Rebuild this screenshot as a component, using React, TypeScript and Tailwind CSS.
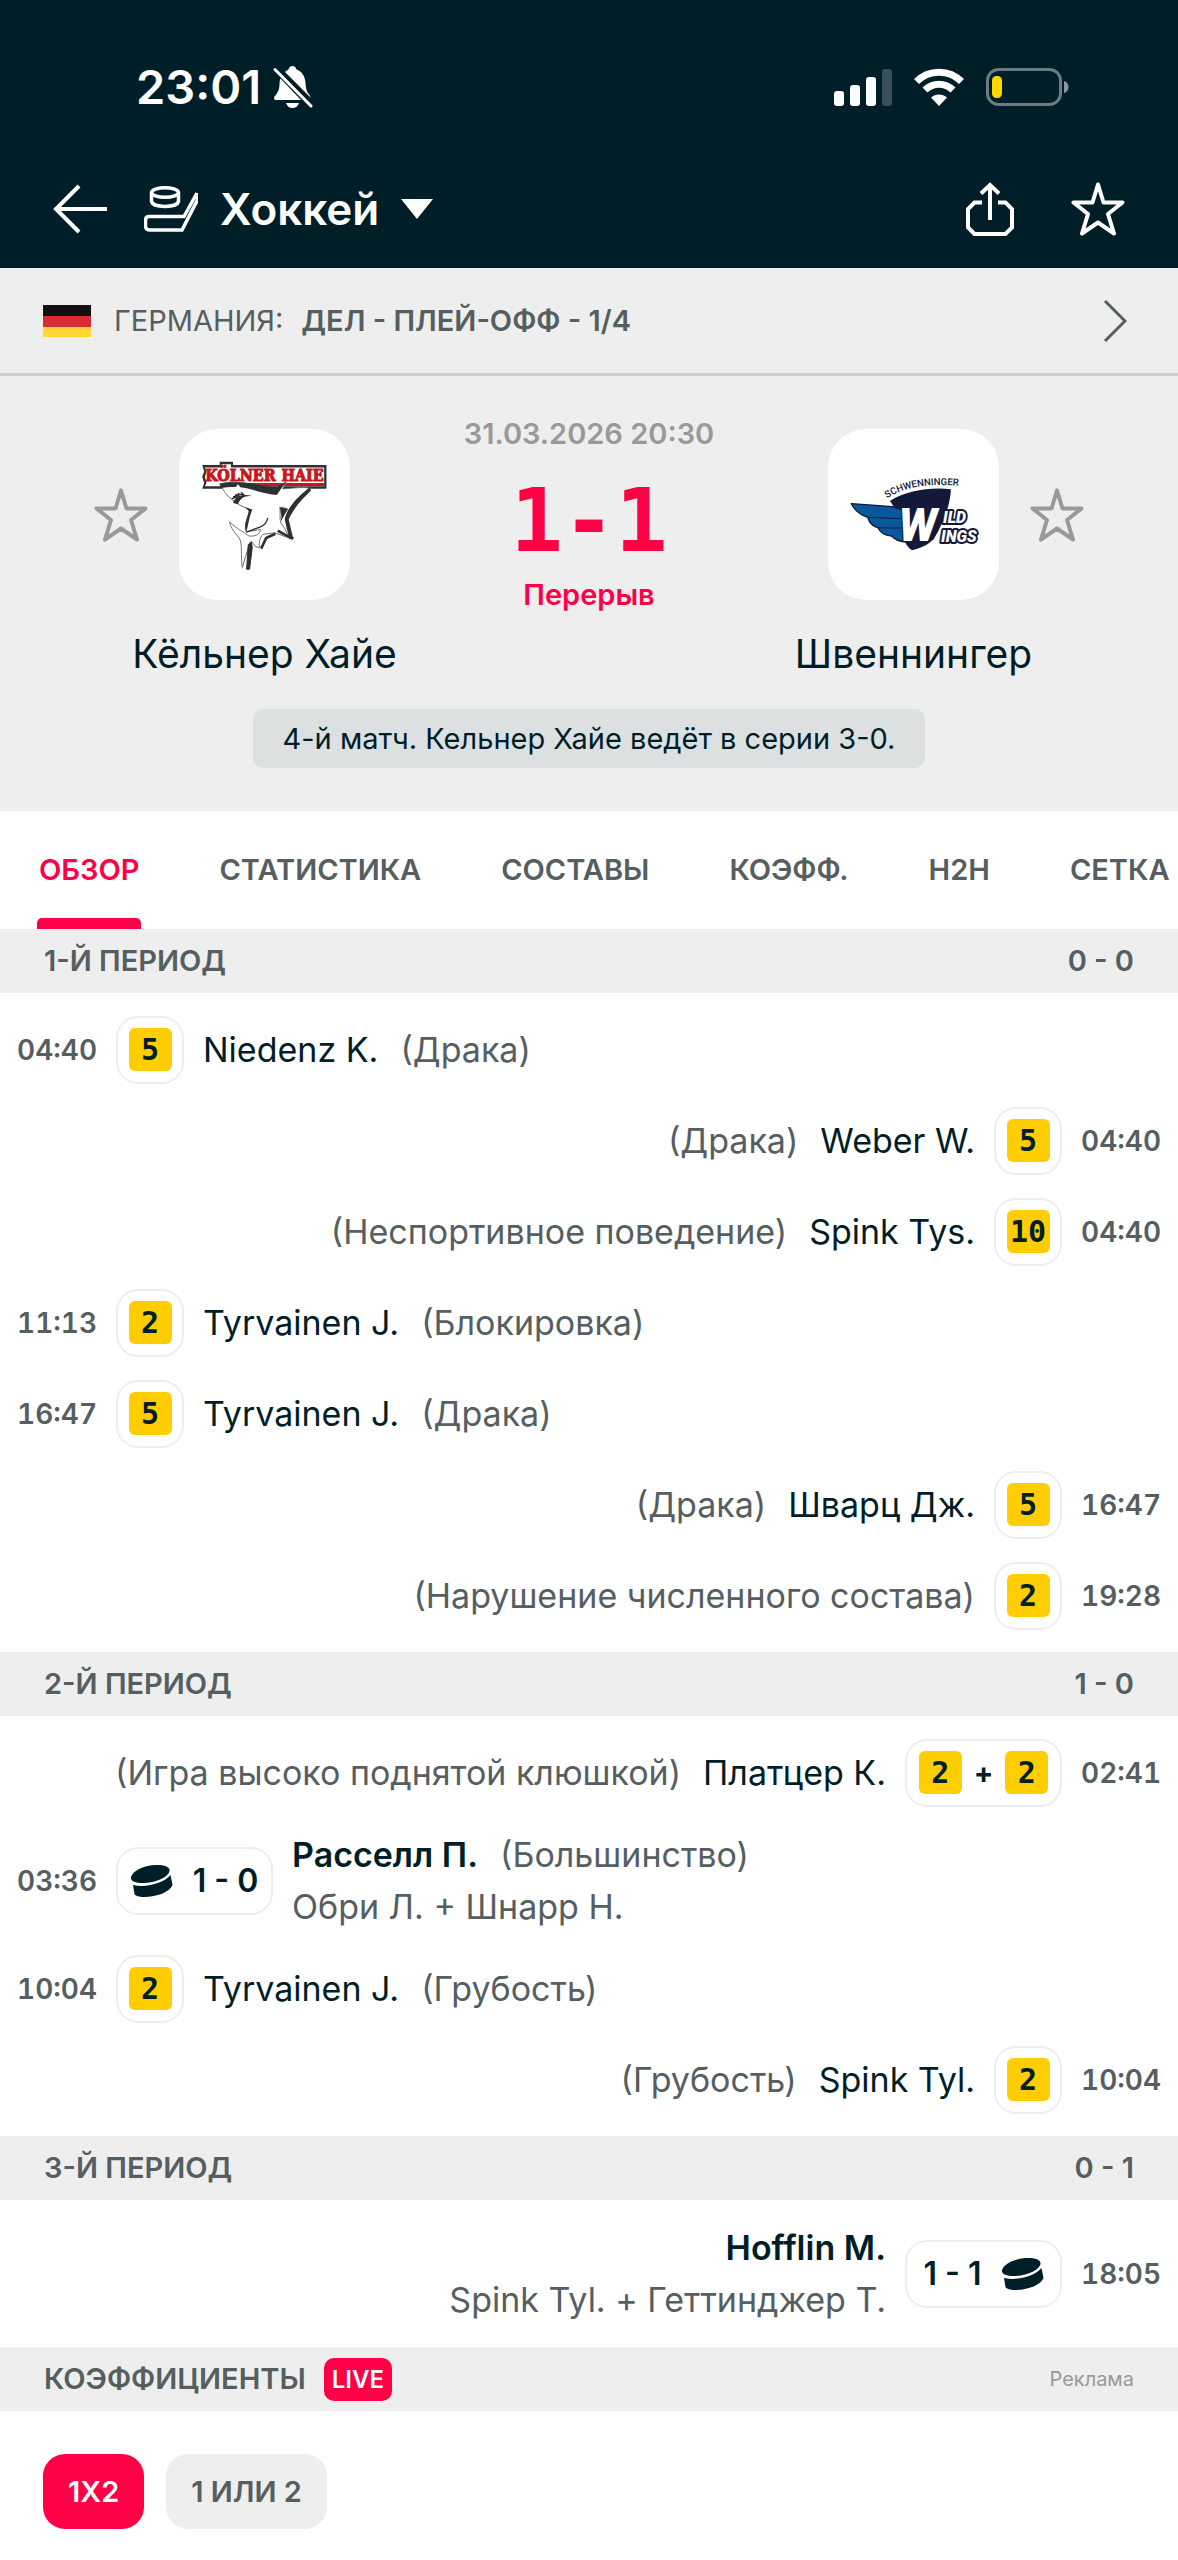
import { useState } from 'react';
import type { ReactNode } from 'react';
import clsx from 'clsx';

interface MatchEvent {
  time:     string;
  side:     'home' | 'away';
  penalty?: string[];
  score?:   string;
  player?:  string;
  reason?:  string;
  assists?: string;
}

interface Period {
  title:  string;
  score:  string;
  events: MatchEvent[];
}

const PERIODS: Period[] = [
  {
    title: '1-Й ПЕРИОД',
    score: '0 - 0',
    events: [
      { time: '04:40', side: 'home', penalty: ['5'],  player: 'Niedenz K.',   reason: '(Драка)' },
      { time: '04:40', side: 'away', penalty: ['5'],  player: 'Weber W.',     reason: '(Драка)' },
      { time: '04:40', side: 'away', penalty: ['10'], player: 'Spink Tys.',   reason: '(Неспортивное поведение)' },
      { time: '11:13', side: 'home', penalty: ['2'],  player: 'Tyrvainen J.', reason: '(Блокировка)' },
      { time: '16:47', side: 'home', penalty: ['5'],  player: 'Tyrvainen J.', reason: '(Драка)' },
      { time: '16:47', side: 'away', penalty: ['5'],  player: 'Шварц Дж.',    reason: '(Драка)' },
      { time: '19:28', side: 'away', penalty: ['2'],  reason: '(Нарушение численного состава)' },
    ],
  },
  {
    title: '2-Й ПЕРИОД',
    score: '1 - 0',
    events: [
      { time: '02:41', side: 'away', penalty: ['2', '2'], player: 'Платцер К.', reason: '(Игра высоко поднятой клюшкой)' },
      { time: '03:36', side: 'home', score: '1 - 0', player: 'Расселл П.', reason: '(Большинство)', assists: 'Обри Л. + Шнарр Н.' },
      { time: '10:04', side: 'home', penalty: ['2'], player: 'Tyrvainen J.', reason: '(Грубость)' },
      { time: '10:04', side: 'away', penalty: ['2'], player: 'Spink Tyl.',   reason: '(Грубость)' },
    ],
  },
  {
    title: '3-Й ПЕРИОД',
    score: '0 - 1',
    events: [
      { time: '18:05', side: 'away', score: '1 - 1', player: 'Hofflin M.', assists: 'Spink Tyl. + Геттинджер Т.' },
    ],
  },
];

const TABS = ['ОБЗОР', 'СТАТИСТИКА', 'СОСТАВЫ', 'КОЭФФ.', 'H2H', 'СЕТКА'];
const MARKETS = ['1X2', '1 ИЛИ 2'];

function StatusBar() {
  return (
    <div className="flex h-12 items-center justify-between pr-[109px] pl-[136px]">
      <div className="flex items-center gap-3">
        <span className="text-[47px] leading-[48px] font-semibold">23:01</span>
        <svg width="40" height="42" viewBox="0 0 40 42" fill="currentColor" aria-hidden="true">
          <path d="M12 6C13.5 4.600 14.500 4 15.500 3.500C16 1.500 17.500 0 19.500 0s3.500 1.500 4 3.500C29 5.500 32 10 32.500 17c.3 6 1.500 9 4 12L38 32z" />
          <path d="M7.500 12.500L28 34H3c-2 0-2.500-2-1.500-3.500C4.500 27 6.500 24 6.500 18c0-2 .3-4 1-5.500z" />
          <path d="M13 37h13c-1 3-3.300 5-6.500 5S14 40 13 37z" />
          <path d="M2 3.500L38 40" fill="none" stroke="currentColor" strokeWidth="3" strokeLinecap="round" />
        </svg>
      </div>
      <div className="flex items-center gap-[21px]">
        <svg width="58" height="38" viewBox="0 0 58 38" fill="currentColor" aria-hidden="true">
          <rect x="0" y="23" width="10" height="15" rx="3" />
          <rect x="16" y="17" width="10" height="21" rx="3" />
          <rect x="32" y="9" width="10" height="29" rx="3" />
          <rect x="48" y="1" width="10" height="37" rx="3" opacity=".22" />
        </svg>
        <svg width="52" height="38" viewBox="0 0 52 38" aria-hidden="true">
          <path d="M3.500 13.500C16 1 36 1 48.500 13.500" fill="none" stroke="currentColor" strokeWidth="7" />
          <path d="M12 22c8-7.800 20-7.800 28 0" fill="none" stroke="currentColor" strokeWidth="7" />
          <path d="M26 38l-8-8.500c4.500-4 11.500-4 16 0z" fill="currentColor" />
        </svg>
        <svg width="83" height="38" viewBox="0 0 83 38" aria-hidden="true">
          <rect x="1.500" y="1.500" width="73" height="35" rx="11" fill="none" stroke="#6b7c83" strokeWidth="3" />
          <rect x="6" y="8" width="10" height="22" rx="4.500" fill="#ffd600" />
          <path d="M78 13c6 1 6 11 0 12z" fill="#8a979c" />
        </svg>
      </div>
    </div>
  );
}

function StarIcon() {
  return (
    <svg width="54" height="54" viewBox="0 0 54 54" fill="none" stroke="currentColor" strokeWidth="4" strokeLinejoin="round" aria-hidden="true">
      <path d="M27 2.500L32.500 20.500H51.500L37 32L43 51.500L27 40.500L11 51.500L17 32L2.500 20.500H21.500Z" />
    </svg>
  );
}

function NavBar() {
  return (
    <div className="mt-[39px] flex h-[118px] items-center justify-between px-[53px]">
      <div className="flex items-center gap-[37px]">
        <button aria-label="Назад">
          <svg width="54" height="50" viewBox="0 0 54 50" fill="none" stroke="currentColor" strokeWidth="4" aria-hidden="true">
            <path d="M54 25H3M26 2L3 25L26 48" />
          </svg>
        </button>
        <button className="flex items-center gap-[22px]">
          <svg width="54" height="46" viewBox="0 0 54 46" fill="none" stroke="currentColor" strokeWidth="3.500" aria-hidden="true">
            <ellipse cx="21" cy="6.500" rx="13.500" ry="4.800" />
            <path d="M7.500 6.500V15.500C9 22 33 22 34.500 15.500V6.500" />
            <path d="M53.500 7V14L38 44H6C3 44 1.500 42.500 1.500 40V34.500C1.500 32 3 30.500 5 30.500H40L53 7" />
          </svg>
          <span className="text-[44px] leading-[52px] font-semibold">Хоккей</span>
          <svg width="32" height="20" viewBox="0 0 32 20" fill="currentColor" aria-hidden="true">
            <path d="M0 0H32L16 20Z" />
          </svg>
        </button>
      </div>
      <div className="flex items-center gap-[57px]">
        <button aria-label="Поделиться">
          <svg width="48" height="54" viewBox="0 0 48 54" fill="none" stroke="currentColor" strokeWidth="4" aria-hidden="true">
            <path d="M24 38V3M15 11.500L24 3L33 11.500" />
            <path d="M16 20.500H8.500L2 27V45.500L8.500 52H39.500L46 45.500V27L39.500 20.500H32" />
          </svg>
        </button>
        <button aria-label="В избранное"><StarIcon /></button>
      </div>
    </div>
  );
}

function LeagueLink() {
  return (
    <a href="#league" className="flex h-[108px] items-center border-b-3 border-[#cdcdcd] pr-[51px] pl-[43px] text-[29px] leading-9 text-[#555e61]">
      <svg width="48" height="32" viewBox="0 0 48 32" className="mr-[23px]" aria-hidden="true">
        <rect width="48" height="11" fill="#111" />
        <rect y="11" width="48" height="11" fill="#dc2a34" />
        <rect y="22" width="48" height="10" fill="#ffd633" />
      </svg>
      <span>ГЕРМАНИЯ:</span>
      <span className="ml-[18px] font-semibold">ДЕЛ - ПЛЕЙ-ОФФ - 1/4</span>
      <svg width="24" height="42" viewBox="0 0 24 42" fill="none" stroke="currentColor" strokeWidth="3" className="ml-auto" aria-hidden="true">
        <path d="M2 1L22 21L2 41" />
      </svg>
    </a>
  );
}

function SharksLogo() {
  return (
    <svg viewBox="27 27 516 516" className="size-full" aria-hidden="true">
      <path d="M97 136H150V126H190V136H472V207H97L103 190L97 172L103 155Z" fill="#2d3133" />
      <path d="M105 143H155V133H184V143H465V200H105L110 190L105 172L110 155Z" fill="#fff" />
      <path d="M150 190H465V199H150Z" fill="#c8161d" />
      <g fill="#c8161d" stroke="#c8161d" strokeWidth="3" fontWeight="bold" fontFamily="'DejaVu Serif Condensed', 'DejaVu Serif', serif" fontSize="48">
        <text x="106" y="185">KÖLNER</text>
        <text x="336" y="185">HAIE</text>
      </g>
      <path d="M152 192C200 180 270 195 310 215L350 186L340 208C370 205 400 202 420 205C395 225 375 250 362 280C350 262 340 262 331 264C335 290 325 305 345 325L360 356L315 340L280 345C270 355 268 372 270 385L258 382C250 372 245 360 240 372L218 445C212 410 220 370 208 355C195 340 182 325 180 308C205 330 225 340 238 350C265 352 272 340 273 330L230 338C222 310 235 300 240 270C200 255 165 230 152 192Z" fill="#fff" stroke="#555" strokeWidth="2.500" />
      <path d="M152 192C195 182 255 190 290 200L322 202L350 186L322 226C275 222 240 205 212 203L205 194L198 202C180 202 163 204 152 205Z" fill="#2d3133" />
      <path d="M190 250C198 225 225 222 250 230C228 226 212 234 205 254Z" fill="#2d3133" />
      <path d="M186 238l20-8M190 232l20-6M196 226l18-2M204 222l16 4M214 218l10 8" stroke="#2d3133" strokeWidth="4" />
      <path d="M225 262L248 270C238 295 236 318 230 338C221 318 232 300 238 275Z" fill="#2d3133" />
      <path d="M230 338L273 322C285 318 292 308 295 295" fill="none" stroke="#2d3133" strokeWidth="4" />
      <path d="M420 205L426 212C400 238 375 262 358 300L372 358L360 360L346 300C352 268 380 235 420 205Z" fill="#2d3133" />
      <path d="M331 264L356 268L334 306C338 290 334 276 331 264Z" fill="#2d3133" />
      <path d="M372 358L345 345L325 334M318 343L290 356L275 388" fill="none" stroke="#2d3133" strokeWidth="8" />
      <path d="M246 368L236 376L231 450L240 450L248 385Z" fill="#2d3133" stroke="#2d3133" strokeWidth="3" />
    </svg>
  );
}

function WingsLogo() {
  return (
    <svg viewBox="21 27 516 516" className="size-full" aria-hidden="true">
      <defs>
        <path id="wings-arc" d="M199 236C250 203 320 189 420 199" />
      </defs>
      <text fontFamily="Roboto, sans-serif" fontSize="29" fontWeight="500" fill="#14193a">
        <textPath href="#wings-arc">SCHWENNINGER</textPath>
      </text>
      <path d="M208 244C260 212 330 202 392 209C390 250 375 300 340 360C320 378 300 388 274 393C262 384 254 372 250 358L225 270Z" fill="#14193a" />
      <path d="M91 252L215 261L254 274V368C235 366 222 360 213 350C195 348 178 340 172 325C155 320 145 308 141 294C118 286 100 270 91 252Z" fill="#07599c" stroke="#14193a" strokeWidth="4" strokeLinejoin="round" />
      <path d="M141 294L254 298M172 325L254 326" stroke="#14193a" strokeWidth="3" />
      <g fontFamily="Roboto, sans-serif" fontWeight="900" fontStyle="italic" fill="#fff" stroke="#14193a" paintOrder="stroke" strokeLinejoin="round">
        <text x="234" y="364" fontSize="138" strokeWidth="6">W</text>
        <text x="368" y="310" fontSize="48" strokeWidth="12">ILD</text>
        <text x="362" y="367" fontSize="48" strokeWidth="12">INGS</text>
      </g>
    </svg>
  );
}

function Team({ name, logo }: { name: string; logo: ReactNode }) {
  return (
    <div className="flex w-[171px] flex-col items-center">
      <div className="size-[171px] rounded-[38px] bg-white">{logo}</div>
      <span className="mt-[30px] text-[39px] leading-[48px] whitespace-nowrap text-[#001e28]">{name}</span>
    </div>
  );
}

function FavoriteButton({ label }: { label: string }) {
  return (
    <button className="flex h-[171px] items-center text-[#999]" aria-label={label}>
      <StarIcon />
    </button>
  );
}

function MatchSummary() {
  return (
    <section className="bg-[#eee] pt-10 pb-[43px]">
      <div className="flex items-start justify-between px-[94px]">
        <div className="flex gap-[31px] pt-[13px]">
          <FavoriteButton label="Кёльнер Хайе в избранное" />
          <Team name="Кёльнер Хайе" logo={<SharksLogo />} />
        </div>
        <div className="flex flex-col items-center font-semibold">
          <time className="text-[29px] leading-9 text-[#999]">31.03.2026 20:30</time>
          <span className="mt-[37px] font-['DejaVu_Sans_Mono',monospace] text-[87px] leading-[64px] font-bold text-[#ff0046]">1-1</span>
          <span className="mt-6 text-[29px] leading-9 text-[#ff0046]">Перерыв</span>
        </div>
        <div className="flex gap-[31px] pt-[13px]">
          <Team name="Швеннингер" logo={<WingsLogo />} />
          <FavoriteButton label="Швеннингер в избранное" />
        </div>
      </div>
      <p className="mx-auto mt-[31px] w-fit rounded-[10px] bg-[#dce0e1] px-[30px] py-3 text-[29px] leading-[35px] text-[#001e28]">
        4-й матч. Кельнер Хайе ведёт в серии 3-0.
      </p>
    </section>
  );
}

function SectionBar({ children }: { children: ReactNode }) {
  return (
    <div className="flex h-16 items-center justify-between bg-[#eee] px-11 text-[29px] leading-9 font-semibold text-[#555e61]">
      {children}
    </div>
  );
}

function Puck() {
  return (
    <svg width="42" height="32" viewBox="0 0 42 32" fill="#001e28" aria-hidden="true">
      <path d="M0 12.500C1 6 13 0 26 0C34 0 39 2 38.500 6C37.500 12 25 18 11 18C4 18-.5 16 0 12.500Z" />
      <path d="M2 20C16 23 33 18 39.500 10L41.500 20C39 27 26 32 13 32C8 32 4.500 31 3.500 29Z" />
    </svg>
  );
}

function EventBadge({ event }: { event: MatchEvent }) {
  const wide = Boolean(event.score) || (event.penalty?.length ?? 0) > 1;
  return (
    <div
      className={clsx(
        'flex h-[68px] shrink-0 items-center justify-center rounded-[22px] border-2 border-[#eee]',
        wide ? 'w-[157px]' : 'w-[68px]',
        event.side === 'away' && event.score && 'flex-row-reverse',
        event.score ? 'gap-5' : 'gap-3',
      )}
    >
      {event.score && (
        <>
          <Puck />
          <span className="text-[32px] leading-10 font-semibold whitespace-nowrap text-[#001e28]">{event.score}</span>
        </>
      )}
      {event.penalty?.map((minutes, i) => (
        <div key={i} className="flex items-center gap-3">
          {i > 0 && <span className="text-[29px] leading-9 font-bold text-[#001e28]">+</span>}
          <span className="flex size-[43px] items-center justify-center rounded-[6px] bg-[#ffcd00] font-['DejaVu_Sans_Mono',monospace] text-[30px] leading-[43px] font-bold text-[#001e28]">
            {minutes}
          </span>
        </div>
      ))}
    </div>
  );
}

function EventRow({ event }: { event: MatchEvent }) {
  const away = event.side === 'away';
  return (
    <li
      className={clsx(
        'flex items-center gap-[19px] px-[17px]',
        away && 'flex-row-reverse',
        event.score ? 'h-[125px]' : 'h-[91px]',
      )}
    >
      <time className="w-20 text-right text-[28px] leading-9 font-semibold text-[#555e61] tabular-nums">{event.time}</time>
      <EventBadge event={event} />
      <div className={clsx('flex flex-col text-[34px] leading-[52px] whitespace-nowrap text-[#555e61]', away && 'items-end')}>
        <div className={clsx('flex gap-[22px]', away && 'flex-row-reverse')}>
          {event.player && <span className={clsx('text-[#001e28]', event.score && 'font-semibold')}>{event.player}</span>}
          {event.reason && <span>{event.reason}</span>}
        </div>
        {event.assists && <span>{event.assists}</span>}
      </div>
    </li>
  );
}

export default function App() {
  const [tab,    setTab]    = useState(TABS[0]);
  const [market, setMarket] = useState(MARKETS[0]);

  return (
    <div className="min-h-screen overflow-x-hidden bg-white font-[Inter,sans-serif]">
      <header className="bg-[#001e28] pt-[63px] text-white">
        <StatusBar />
        <NavBar />
      </header>

      <div className="bg-[#eee]"><LeagueLink /></div>
      <MatchSummary />

      <nav className="flex h-[118px] gap-[76px] overflow-hidden px-[37px]">
        {TABS.map(t => (
          <button
            key={t}
            onClick={() => setTab(t)}
            className={clsx(
              'relative shrink-0 px-0.5 text-[29px] leading-9 font-semibold',
              tab === t ? 'text-[#ff0046]' : 'text-[#555e61]',
            )}
          >
            {t}
            {tab === t && <span className="absolute inset-x-0 bottom-0 h-[11px] rounded-t-[5px] bg-[#ff0046]" />}
          </button>
        ))}
      </nav>

      {PERIODS.map(p => (
        <section key={p.title}>
          <SectionBar>
            <h2>{p.title}</h2>
            <span>{p.score}</span>
          </SectionBar>
          <ul className="py-[11px]">
            {p.events.map((e, i) => <EventRow key={i} event={e} />)}
          </ul>
        </section>
      ))}

      <section>
        <SectionBar>
          <h2 className="flex items-center gap-[18px]">
            КОЭФФИЦИЕНТЫ
            <span className="rounded-[10px] bg-[#ff0046] px-2 text-[24px] leading-[43px] text-white">LIVE</span>
          </h2>
          <span className="text-[20px] leading-6 font-normal text-[#999]">Реклама</span>
        </SectionBar>
        <div className="flex gap-[22px] px-[43px] py-[43px]">
          {MARKETS.map(m => (
            <button
              key={m}
              onClick={() => setMarket(m)}
              className={clsx(
                'h-[75px] rounded-[22px] px-[25px] text-[29px] leading-9 font-semibold',
                market === m ? 'bg-[#ff0046] text-white' : 'bg-[#eee] text-[#555e61]',
              )}
            >
              {m}
            </button>
          ))}
        </div>
      </section>
    </div>
  );
}
